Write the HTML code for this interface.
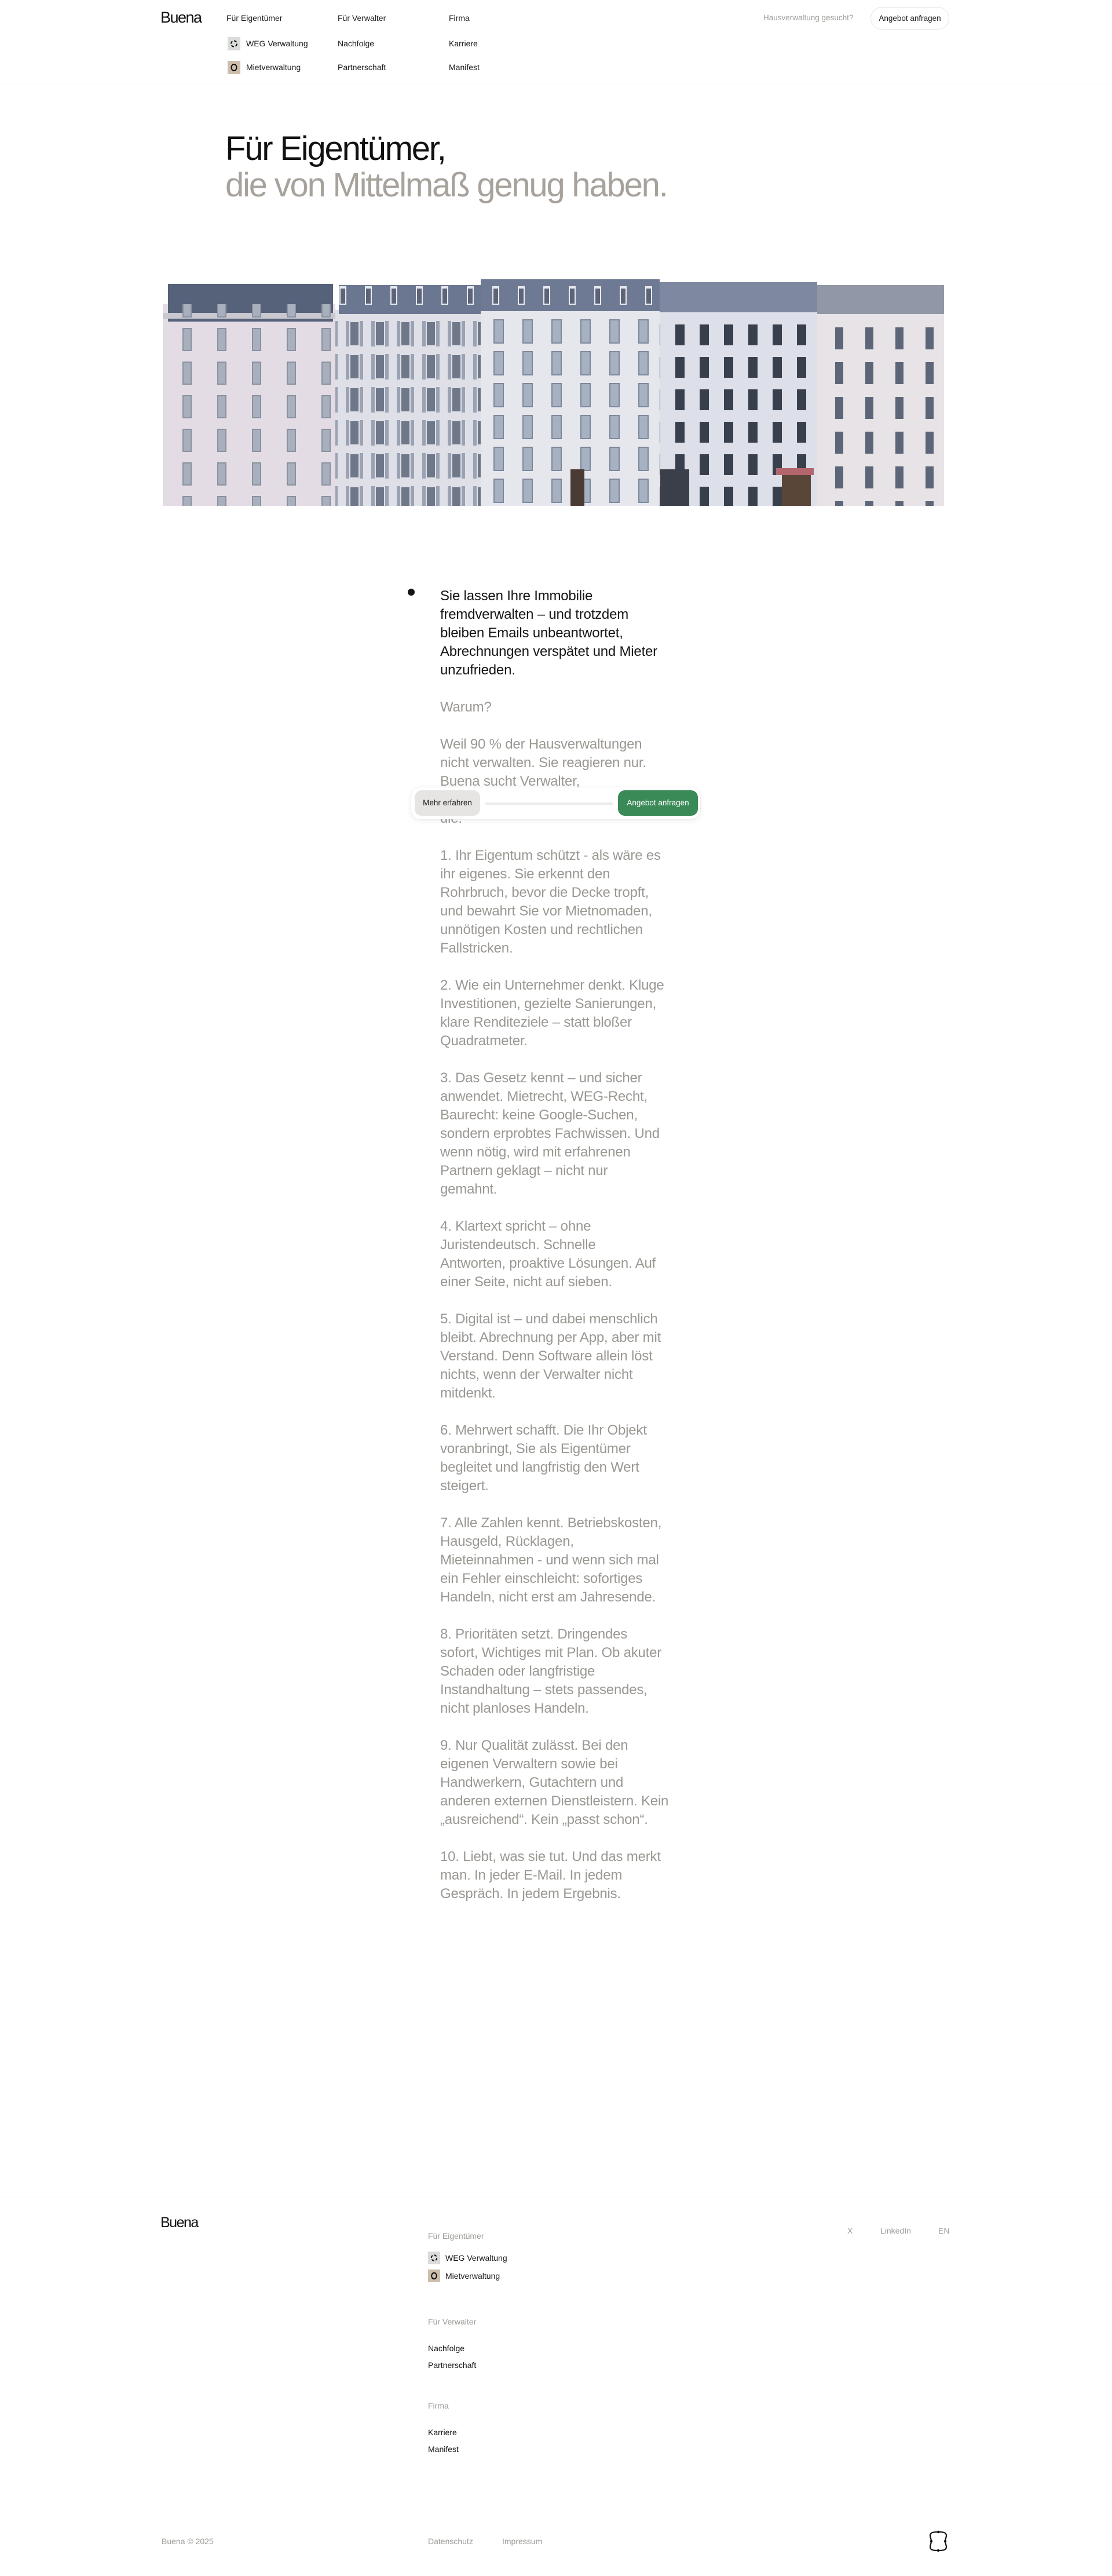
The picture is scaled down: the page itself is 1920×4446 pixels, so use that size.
<!DOCTYPE html>
<html><head><meta charset="utf-8"><style>
*{margin:0;padding:0;box-sizing:border-box}
body{width:1920px;height:4446px;background:#fff;font-family:"Liberation Sans",Arial,sans-serif;color:#141414;position:relative;overflow:hidden}
.a{position:absolute;white-space:nowrap}
.nav{font-size:14px;line-height:20px;color:#1a1a1a}
.logo{font-size:27px;letter-spacing:-1.5px;color:#111}
.ic{position:absolute;width:22px;height:23px}
.h1{font-size:58px;line-height:63px;letter-spacing:-2.2px}
.txt{left:760px;top:1013px;font-size:24px;line-height:32px;letter-spacing:-0.2px;color:#9b9893;white-space:nowrap}
.txt p{margin-bottom:32px}
.txt p.b{color:#151515}
.f{font-size:14px;line-height:20px}
.g{color:#9e9b97}
</style></head><body>

<!-- header -->
<div class="a logo" style="left:277px;top:15px">Buena</div>
<div class="a nav" style="left:391px;top:21px">Für Eigentümer</div>
<div class="a nav" style="left:583px;top:21px">Für Verwalter</div>
<div class="a nav" style="left:775px;top:21px">Firma</div>
<svg class="ic" style="left:393px;top:64px" viewBox="0 0 22 23"><rect width="22" height="23" fill="#d9dcd8"/><circle cx="11" cy="11.5" r="5" fill="none" stroke="#111" stroke-width="2" stroke-dasharray="5 2.8"/></svg>
<div class="a nav" style="left:425px;top:65px">WEG Verwaltung</div>
<svg class="ic" style="left:393px;top:105px" viewBox="0 0 22 23"><rect width="22" height="23" fill="#cdbfab"/><ellipse cx="11" cy="11.5" rx="4.5" ry="5.5" fill="none" stroke="#111" stroke-width="2"/></svg>
<div class="a nav" style="left:425px;top:106px">Mietverwaltung</div>
<div class="a nav" style="left:583px;top:65px">Nachfolge</div>
<div class="a nav" style="left:583px;top:106px">Partnerschaft</div>
<div class="a nav" style="left:775px;top:65px">Karriere</div>
<div class="a nav" style="left:775px;top:106px">Manifest</div>
<div class="a nav" style="left:1318px;top:21px;color:#9e9b97;font-size:13.5px">Hausverwaltung gesucht?</div>
<div class="a nav" style="left:1503px;top:12px;width:136px;height:39px;border:1px solid #e4e4e4;border-radius:20px;text-align:center;line-height:37px;font-size:13.5px">Angebot anfragen</div>
<div class="a" style="left:0;top:143px;width:1920px;height:1px;background:#f4f4f4"></div>

<div class="a h1" style="left:389px;top:225px;color:#111">Für Eigentümer,</div>
<div class="a h1" style="left:389px;top:288px;color:#a7a29b">die von Mittelmaß genug haben.</div>

<!-- building -->
<svg class="a" style="left:0;top:420px" width="1920" height="470" viewBox="0 420 1920 470">
<defs>
<pattern id="w1" x="305" y="560" width="60" height="58" patternUnits="userSpaceOnUse"><rect x="10" y="6" width="16" height="40" fill="#8a91a0"/><rect x="12" y="8" width="12" height="36" fill="#a9b0bd"/></pattern>
<pattern id="w2" x="595" y="550" width="44" height="57" patternUnits="userSpaceOnUse"><rect x="2" y="4" width="6" height="44" fill="#9aa2b4"/><rect x="10" y="6" width="14" height="40" fill="#6f7889"/><rect x="26" y="4" width="6" height="44" fill="#9aa2b4"/></pattern>
<pattern id="w3" x="840" y="545" width="50" height="55" patternUnits="userSpaceOnUse"><rect x="12" y="6" width="18" height="42" fill="#7d889b"/><rect x="14" y="8" width="14" height="38" fill="#a6b1c2"/></pattern>
<pattern id="w4" x="1160" y="550" width="42" height="56" patternUnits="userSpaceOnUse"><rect x="6" y="10" width="16" height="36" fill="#39404d"/></pattern>
<pattern id="w5" x="1430" y="555" width="52" height="60" patternUnits="userSpaceOnUse"><rect x="12" y="10" width="14" height="38" fill="#5d6678"/></pattern>
<pattern id="d" x="0" y="0" width="44" height="60" patternUnits="userSpaceOnUse"><rect x="14" y="14" width="12" height="32" fill="#e9eaf0"/><rect x="16" y="18" width="8" height="26" fill="#5c6478"/></pattern>
</defs>
<rect x="281" y="525" width="298" height="348" fill="#e3dce4"/>
<rect x="290" y="490" width="285" height="65" fill="#56617a"/>
<rect x="281" y="540" width="298" height="10" fill="#c9c7cf"/>
<rect x="281" y="525" width="298" height="348" fill="url(#w1)"/>
<rect x="579" y="535" width="251" height="338" fill="#dfe0e7"/>
<rect x="585" y="492" width="245" height="50" fill="#6b7791"/>
<rect x="585" y="492" width="245" height="50" fill="url(#d)"/>
<rect x="579" y="545" width="251" height="328" fill="url(#w2)"/>
<rect x="830" y="533" width="309" height="340" fill="#e5e7ed"/>
<rect x="830" y="482" width="309" height="55" fill="#6e7a93"/>
<rect x="830" y="482" width="309" height="55" fill="url(#d)"/>
<rect x="830" y="540" width="309" height="333" fill="url(#w3)"/>
<rect x="1139" y="537" width="272" height="336" fill="#dde0e9"/>
<rect x="1139" y="487" width="272" height="52" fill="#7e88a0"/>
<rect x="1139" y="540" width="272" height="333" fill="url(#w4)"/>
<rect x="1411" y="540" width="219" height="333" fill="#e7e3e7"/>
<rect x="1411" y="492" width="219" height="50" fill="#9297a8"/>
<rect x="1411" y="545" width="219" height="328" fill="url(#w5)"/>
<rect x="1140" y="810" width="50" height="63" fill="#3b3f4a"/>
<rect x="1340" y="808" width="65" height="12" fill="#b4666e"/>
<rect x="1350" y="820" width="50" height="53" fill="#5a4639"/>
<rect x="985" y="810" width="24" height="63" fill="#4a3b34"/>
</svg>

<!-- main text -->
<div class="a" style="left:704px;top:1016px;width:12px;height:12px;border-radius:50%;background:#151515"></div>
<div class="a txt">
<p class="b">Sie lassen Ihre Immobilie<br>fremdverwalten – und trotzdem<br>bleiben Emails unbeantwortet,<br>Abrechnungen verspätet und Mieter<br>unzufrieden.</p>
<p>Warum?</p>
<p>Weil 90 % der Hausverwaltungen<br>nicht verwalten. Sie reagieren nur.<br>Buena sucht Verwalter,<br>Hausverwaltungen,<br>die.</p>
<p>1. Ihr Eigentum schützt - als wäre es<br>ihr eigenes. Sie erkennt den<br>Rohrbruch, bevor die Decke tropft,<br>und bewahrt Sie vor Mietnomaden,<br>unnötigen Kosten und rechtlichen<br>Fallstricken.</p>
<p>2. Wie ein Unternehmer denkt. Kluge<br>Investitionen, gezielte Sanierungen,<br>klare Renditeziele – statt bloßer<br>Quadratmeter.</p>
<p>3. Das Gesetz kennt – und sicher<br>anwendet. Mietrecht, WEG-Recht,<br>Baurecht: keine Google-Suchen,<br>sondern erprobtes Fachwissen. Und<br>wenn nötig, wird mit erfahrenen<br>Partnern geklagt – nicht nur<br>gemahnt.</p>
<p>4. Klartext spricht – ohne<br>Juristendeutsch. Schnelle<br>Antworten, proaktive Lösungen. Auf<br>einer Seite, nicht auf sieben.</p>
<p>5. Digital ist – und dabei menschlich<br>bleibt. Abrechnung per App, aber mit<br>Verstand. Denn Software allein löst<br>nichts, wenn der Verwalter nicht<br>mitdenkt.</p>
<p>6. Mehrwert schafft. Die Ihr Objekt<br>voranbringt, Sie als Eigentümer<br>begleitet und langfristig den Wert<br>steigert.</p>
<p>7. Alle Zahlen kennt. Betriebskosten,<br>Hausgeld, Rücklagen,<br>Mieteinnahmen - und wenn sich mal<br>ein Fehler einschleicht: sofortiges<br>Handeln, nicht erst am Jahresende.</p>
<p>8. Prioritäten setzt. Dringendes<br>sofort, Wichtiges mit Plan. Ob akuter<br>Schaden oder langfristige<br>Instandhaltung – stets passendes,<br>nicht planloses Handeln.</p>
<p>9. Nur Qualität zulässt. Bei den<br>eigenen Verwaltern sowie bei<br>Handwerkern, Gutachtern und<br>anderen externen Dienstleistern. Kein<br>„ausreichend“. Kein „passt schon“.</p>
<p>10. Liebt, was sie tut. Und das merkt<br>man. In jeder E-Mail. In jedem<br>Gespräch. In jedem Ergebnis.</p>
</div>

<!-- floating bar -->
<div class="a" style="left:710px;top:1359px;width:499px;height:55px;background:#fff;border-radius:16px;box-shadow:0 2px 10px rgba(0,0,0,.08),0 0 0 1px rgba(0,0,0,.03)"></div>
<div class="a" style="left:716px;top:1364px;width:113px;height:44px;background:#e6e5e3;border-radius:12px;font-size:13.5px;line-height:44px;text-align:center;color:#1a1a1a">Mehr erfahren</div>
<div class="a" style="left:838px;top:1385px;width:220px;height:4px;background:#ececec;border-radius:2px"></div>
<div class="a" style="left:1067px;top:1364px;width:138px;height:44px;background:#3a8a57;border-radius:12px;font-size:13.5px;line-height:44px;text-align:center;color:#fff">Angebot anfragen</div>

<!-- footer -->
<div class="a" style="left:0;top:3793px;width:1920px;height:1px;background:#f0f0f0"></div>
<div class="a logo" style="left:277px;top:3822px;font-size:25px">Buena</div>
<div class="a f g" style="left:739px;top:3849px">Für Eigentümer</div>
<svg class="ic" style="left:739px;top:3886px;width:21px;height:22px" viewBox="0 0 22 23"><rect width="22" height="23" fill="#d9dcd8"/><circle cx="11" cy="11.5" r="5" fill="none" stroke="#111" stroke-width="2" stroke-dasharray="5 2.8"/></svg>
<div class="a f" style="left:769px;top:3887px">WEG Verwaltung</div>
<svg class="ic" style="left:739px;top:3917px;width:21px;height:22px" viewBox="0 0 22 23"><rect width="22" height="23" fill="#cdbfab"/><ellipse cx="11" cy="11.5" rx="4.5" ry="5.5" fill="none" stroke="#111" stroke-width="2"/></svg>
<div class="a f" style="left:769px;top:3918px">Mietverwaltung</div>
<div class="a f g" style="left:739px;top:3997px">Für Verwalter</div>
<div class="a f" style="left:739px;top:4043px">Nachfolge</div>
<div class="a f" style="left:739px;top:4072px">Partnerschaft</div>
<div class="a f g" style="left:739px;top:4142px">Firma</div>
<div class="a f" style="left:739px;top:4188px">Karriere</div>
<div class="a f" style="left:739px;top:4217px">Manifest</div>
<div class="a f g" style="left:1463px;top:3840px">X</div>
<div class="a f g" style="left:1520px;top:3840px">LinkedIn</div>
<div class="a f g" style="left:1620px;top:3840px">EN</div>
<div class="a f g" style="left:279px;top:4376px">Buena © 2025</div>
<div class="a f g" style="left:739px;top:4376px">Datenschutz</div>
<div class="a f g" style="left:867px;top:4376px">Impressum</div>
<svg class="a" style="left:1600px;top:4366px" width="40" height="40" viewBox="0 0 40 40"><path d="M20 4 C26 4 34 4 34 10 C34 14 32 16 32 20 C32 24 34 26 34 30 C34 36 26 36 20 36 C14 36 6 36 6 30 C6 26 8 24 8 20 C8 16 6 14 6 10 C6 4 14 4 20 4Z" fill="none" stroke="#111" stroke-width="2.2"/><circle cx="20" cy="4" r="2.2" fill="#111"/><circle cx="20" cy="36" r="2.2" fill="#111"/><circle cx="8" cy="20" r="2.2" fill="#111"/><circle cx="32" cy="20" r="2.2" fill="#111"/></svg>
</body></html>
